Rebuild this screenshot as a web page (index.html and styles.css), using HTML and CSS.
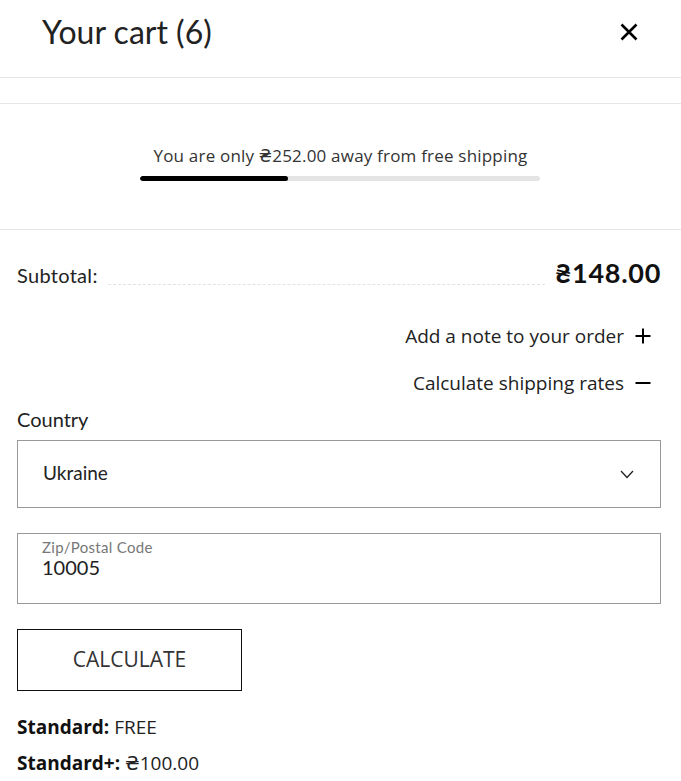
FILE: index.html
```html
<!DOCTYPE html>
<html>
<head>
<meta charset="utf-8">
<link rel="stylesheet" href="styles.css">
</head>
<body>
<div class="drawer">
  <header class="head">
    <h2 class="title">Your cart (6)</h2>
    <button class="close" aria-label="Close">
      <svg width="18" height="18" viewBox="0 0 18 18"><path d="M1.5 1.5 L16.5 16.5 M16.5 1.5 L1.5 16.5" stroke="#000" stroke-width="2.6" fill="none"/></svg>
    </button>
  </header>
  <div class="spacer"></div>
  <section class="ship">
    <p class="ship-text">You are only ₴252.00 away from free shipping</p>
    <div class="bar"><div class="fill" style="width:37%"></div></div>
  </section>
  <section class="body">
    <div class="subtotal">
      <span class="sub-label">Subtotal:</span>
      <span class="dots"></span>
      <span class="sub-price">₴148.00</span>
    </div>
    <div class="toggle t1">
      <span>Add a note to your order</span>
      <svg width="16" height="16" viewBox="0 0 16 16"><path d="M8 0.5 V15.5 M0.5 8 H15.5" stroke="#000" stroke-width="2" fill="none"/></svg>
    </div>
    <div class="toggle t2">
      <span>Calculate shipping rates</span>
      <svg width="16" height="16" viewBox="0 0 16 16"><path d="M0.5 8 H15.5" stroke="#000" stroke-width="2" fill="none"/></svg>
    </div>
    <label class="label">Country</label>
    <div class="select">
      <span>Ukraine</span>
      <svg width="14" height="9" viewBox="0 0 14 9"><path d="M1 1 L7 7.5 L13 1" stroke="#222" stroke-width="1.3" fill="none"/></svg>
    </div>
    <div class="zip">
      <span class="zip-label">Zip/Postal Code</span>
      <span class="zip-val">10005</span>
    </div>
    <button class="calc">CALCULATE</button>
    <p class="rate"><b>Standard:</b> FREE</p>
    <p class="rate"><b>Standard+:</b> ₴100.00</p>
  </section>
</div>
</body>
</html>
```
FILE: styles.css
```css
* { box-sizing: border-box; }
html, body { margin: 0; padding: 0; background: #fff; }
body { font-family: "Open Sans", "DejaVu Sans", sans-serif; color: #222; }

.drawer { width: 681px; }

.head {
  height: 78px;
  border-bottom: 1px solid #e6e6e6;
  display: flex;
  align-items: center;
  justify-content: space-between;
  padding: 0 43px 14px 42px;
}
.title {
  margin: 0;
  font-family: "Lato", "DejaVu Sans", sans-serif;
  font-weight: 400;
  font-size: 32px;
  line-height: 38px;
  color: #222;
}
.close {
  border: 0; background: none; padding: 0; margin: 0;
  display: flex; cursor: pointer;
}

.spacer { height: 26px; border-bottom: 1px solid #e6e6e6; }

.ship {
  height: 126px;
  border-bottom: 1px solid #e6e6e6;
  display: flex;
  flex-direction: column;
  align-items: center;
  padding-top: 40px;
}
.ship-text {
  margin: 0;
  font-size: 17px;
  letter-spacing: 0.2px;
  line-height: 23px;
  color: #333;
}
.bar {
  margin-top: 9px;
  margin-right: 2px;
  width: 400px;
  height: 5px;
  border-radius: 3px;
  background: #e4e4e4;
  overflow: hidden;
}
.fill { height: 100%; background: #000; border-radius: 3px; }

.body { padding: 0 20px 0 17px; }

.subtotal {
  display: flex;
  align-items: flex-end;
  margin-top: 28px;
  height: 30px;
}
.sub-label {
  font-family: "Lato", "DejaVu Sans", sans-serif;
  font-size: 20px;
  letter-spacing: 0.3px;
  line-height: 22px;
  color: #222;
  margin-bottom: 2px;
}
.dots {
  flex: 1;
  margin: 0 10px 3px 10px;
  border-bottom: 1px dashed #e2e2e2;
}
.sub-price {
  font-family: "Lato", "DejaVu Sans", sans-serif;
  font-weight: 700;
  font-size: 27px;
  letter-spacing: 0.7px;
  line-height: 30px;
  color: #111;
}

.toggle {
  display: flex;
  justify-content: flex-end;
  align-items: center;
  gap: 11px;
  padding-right: 10px;
  font-size: 19px;
  line-height: 24px;
  color: #222;
}
.t1 { margin-top: 36px; }
.t2 { margin-top: 23px; }

.label {
  display: block;
  margin-top: 12px;
  font-family: "Lato", "DejaVu Sans", sans-serif;
  font-size: 20px;
  line-height: 24px;
  color: #222;
}

.select {
  margin-top: 9px;
  height: 68px;
  border: 1px solid #999;
  display: flex;
  align-items: center;
  justify-content: space-between;
  padding: 0 26px 3px 25px;
  font-family: "Lato", "DejaVu Sans", sans-serif;
  font-size: 19px;
  color: #222;
}
.select svg { margin-top: 3px; }

.zip {
  margin-top: 25px;
  height: 71px;
  border: 1px solid #999;
  display: flex;
  flex-direction: column;
  padding: 4px 24px 0 24px;
  font-family: "Lato", "DejaVu Sans", sans-serif;
}
.zip-label { font-size: 15px; letter-spacing: 0.3px; line-height: 18px; color: #777; }
.zip-val { font-size: 20px; line-height: 22px; color: #222; }

.calc {
  display: block;
  margin-top: 25px;
  width: 225px;
  height: 62px;
  border: 1px solid #111;
  background: #fff;
  font-family: "Open Sans", "DejaVu Sans", sans-serif;
  font-size: 21px;
  color: #333;
  padding: 0 0 2px 0;
}

.rate {
  margin: 0;
  font-size: 19px;
  line-height: 36px;
  color: #222;
}
.calc + .rate { margin-top: 18px; }
.rate b { font-weight: 700; color: #111; }
```
